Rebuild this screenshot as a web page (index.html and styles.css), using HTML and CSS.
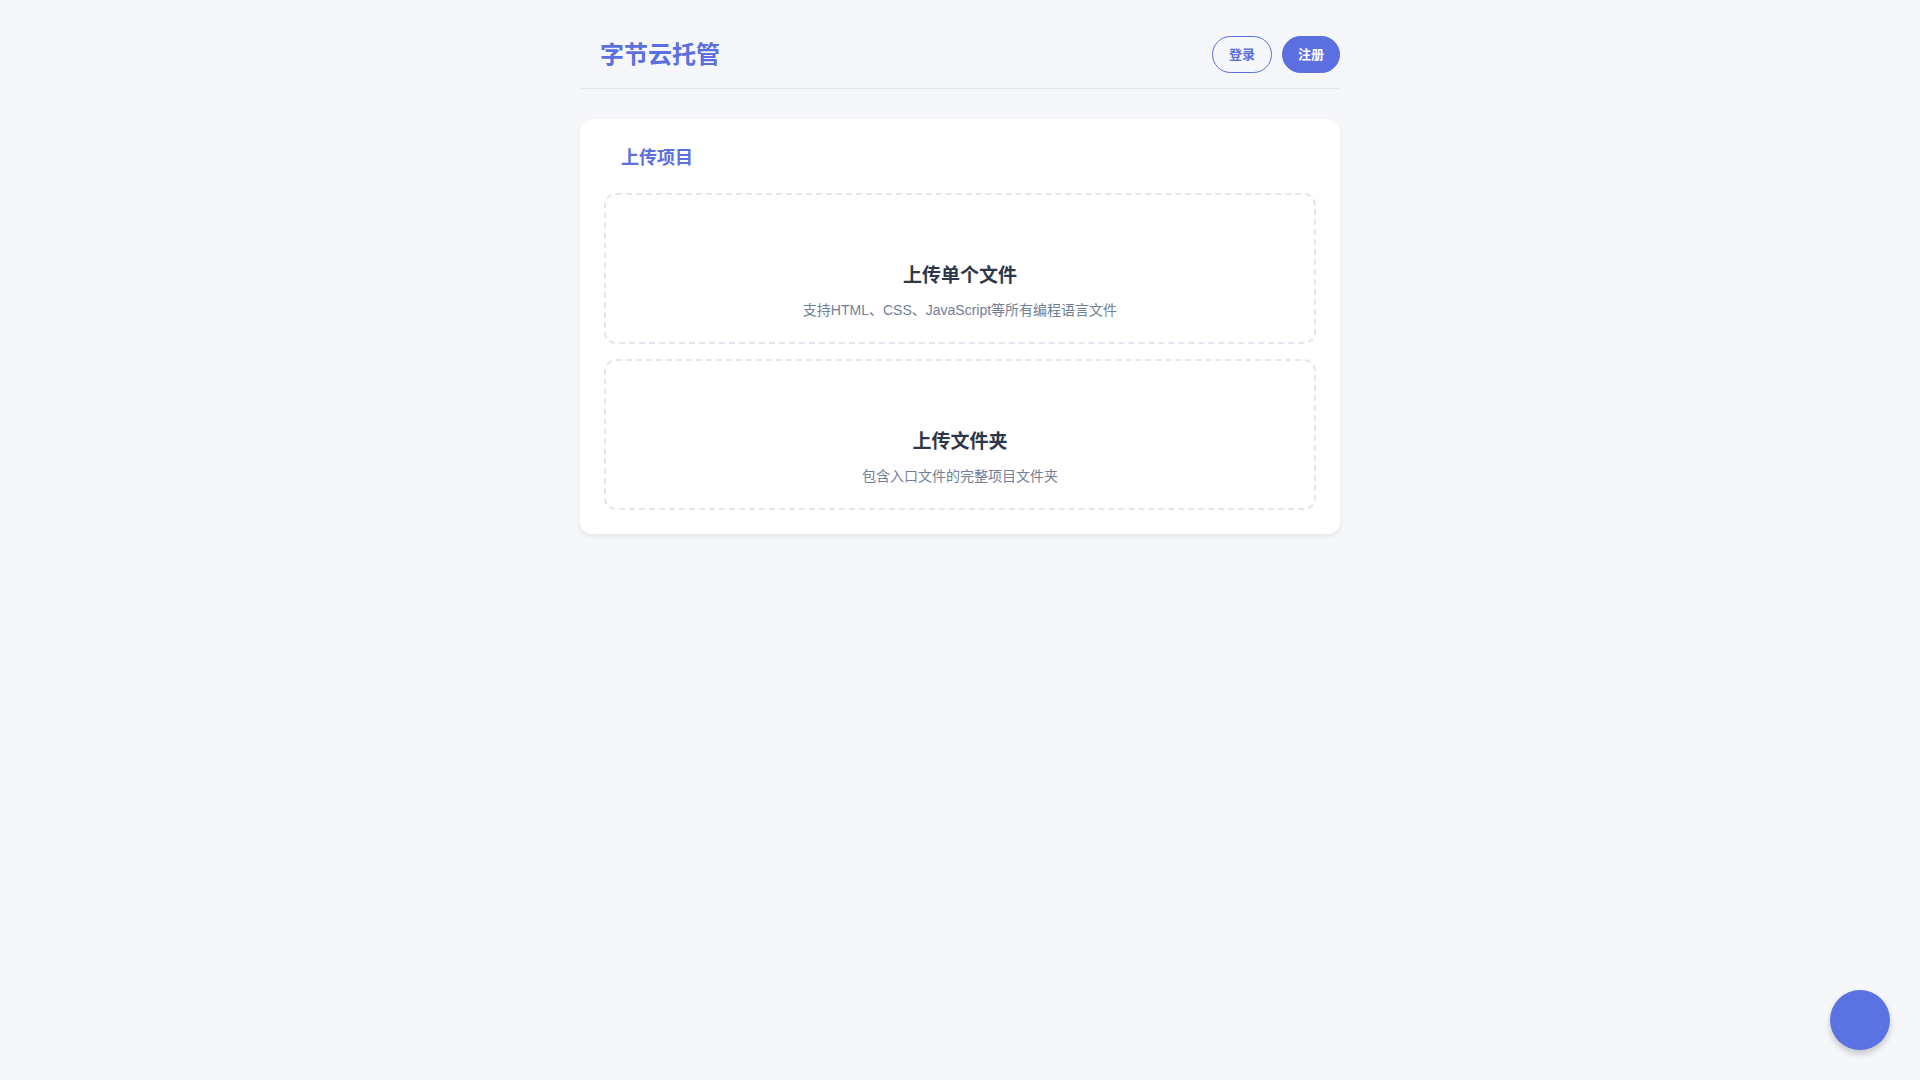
FILE: index.html
```html
<!DOCTYPE html>
<html lang="zh-CN">
<head>
<meta charset="UTF-8">
<title>字节云托管</title>
<link rel="stylesheet" href="styles.css">
</head>
<body>
<div class="container">
  <header class="header">
    <div class="logo">字节云托管</div>
    <div class="auth">
      <button class="btn btn-outline">登录</button>
      <button class="btn btn-primary">注册</button>
    </div>
  </header>
  <main class="card">
    <h2 class="card-title">上传项目</h2>
    <div class="upload-list">
      <div class="upload-box">
        <div class="upload-icon"></div>
        <h3 class="upload-title">上传单个文件</h3>
        <p class="upload-desc">支持HTML、CSS、JavaScript等所有编程语言文件</p>
      </div>
      <div class="upload-box">
        <div class="upload-icon"></div>
        <h3 class="upload-title">上传文件夹</h3>
        <p class="upload-desc">包含入口文件的完整项目文件夹</p>
      </div>
    </div>
  </main>
</div>
<button class="fab" aria-label="help"></button>
</body>
</html>
```
FILE: styles.css
```css
* { box-sizing: border-box; }
html, body { margin: 0; padding: 0; }
body {
  background: #f5f7fa;
  font-family: "Liberation Sans", "Noto Sans CJK SC", sans-serif;
  color: #2d3748;
  min-height: 100vh;
}
.container {
  width: 760px;
  margin: 0 auto;
}
.header {
  display: flex;
  align-items: center;
  justify-content: space-between;
  padding: 36px 0 15px;
  border-bottom: 1px solid #e2e8f0;
}
.logo {
  padding-left: 20px;
  font-size: 24px;
  font-weight: 700;
  color: #5b6fe0;
  line-height: 37px;
}
.auth {
  display: flex;
  gap: 10px;
}
.btn {
  height: 37px;
  border-radius: 999px;
  font-family: inherit;
  font-size: 13px;
  font-weight: 700;
  line-height: 35px;
  padding: 0 16px;
  cursor: pointer;
}
.btn-outline {
  background: transparent;
  border: 1px solid #5b6fe0;
  color: #5b6fe0;
}
.btn-primary {
  background: #5b6fe0;
  border: 1px solid #5b6fe0;
  color: #ffffff;
  padding: 0 15px;
}
.card {
  margin-top: 30px;
  background: #ffffff;
  border-radius: 12px;
  padding: 24px;
  box-shadow: 0 2px 5px rgba(0, 0, 0, 0.07);
}
.card-title {
  margin: 0 0 21px;
  padding: 1px 17px 0;
  font-size: 18px;
  line-height: 28px;
  font-weight: 700;
  color: #5b6fe0;
}
.upload-list {
  display: flex;
  flex-direction: column;
  gap: 15px;
}
.upload-box {
  border: 2px dashed #e2e8f0;
  border-radius: 12px;
  padding: 20px 20px 21px;
  text-align: center;
}
.upload-icon {
  height: 46px;
}
.upload-title {
  margin: 0 0 10px;
  font-size: 19px;
  line-height: 29px;
  font-weight: 700;
  color: #2d3748;
}
.upload-desc {
  margin: 0;
  font-size: 14px;
  line-height: 21px;
  color: #718096;
}
.fab {
  position: fixed;
  right: 30px;
  bottom: 30px;
  width: 60px;
  height: 60px;
  border-radius: 50%;
  border: none;
  background: #5a72e2;
  box-shadow: 0 4px 6px rgba(0, 0, 0, 0.2);
  cursor: pointer;
}
```
